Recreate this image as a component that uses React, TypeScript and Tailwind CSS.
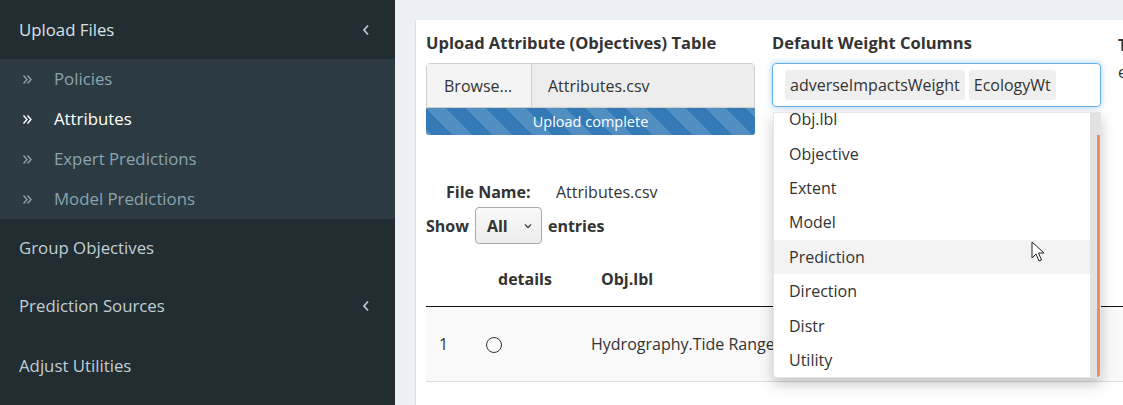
import React from 'react';

const font = { fontFamily: '"Open Sans", Lato, sans-serif' };

function Chevron() {
  return (
    <svg width="8" height="12" viewBox="0 0 8 12" className="text-[#b8c7ce]">
      <path d="M6 1.5 L2 6 L6 10.5" fill="none" stroke="currentColor" strokeWidth="1.8" />
    </svg>
  );
}

function DoubleAngle() {
  return (
    <svg width="11" height="11" viewBox="0 0 11 11" className="mr-[21px]">
      <path d="M1.5 1.5 L5 5.5 L1.5 9.5 M5.5 1.5 L9 5.5 L5.5 9.5" fill="none" stroke="currentColor" strokeWidth="1.4" />
    </svg>
  );
}

function Sidebar() {
  const sub = ['Policies', 'Attributes', 'Expert Predictions', 'Model Predictions'];
  return (
    <aside className="w-[395px] shrink-0 bg-[#222d32] text-[16.8px] text-[#c3ced4]">
      <div className="h-[59px] flex items-center justify-between pl-[19px] pr-[25px] text-[#d9e1e4]">
        <span>Upload Files</span>
        <Chevron />
      </div>
      <ul className="bg-[#2c3b41]">
        {sub.map((s) => (
          <li
            key={s}
            className={
              'h-[40px] flex items-center pl-[22px] ' +
              (s === 'Attributes' ? 'text-white' : 'text-[#8aa4af]')
            }
          >
            <DoubleAngle />
            <span>{s}</span>
          </li>
        ))}
      </ul>
      <div className="h-[57px] flex items-center pl-[19px]">Group Objectives</div>
      <div className="h-[60px] flex items-center justify-between pl-[19px] pr-[25px]">
        <span>Prediction Sources</span>
        <Chevron />
      </div>
      <div className="h-[59px] flex items-center pl-[19px]">Adjust Utilities</div>
    </aside>
  );
}

function Cursor() {
  return (
    <svg width="14" height="22" viewBox="0 0 14 22" className="absolute left-[257px] top-[128px]">
      <path d="M1 1 L1 17 L5 13 L8 20 L10.5 19 L7.5 12 L13 12 Z" fill="white" stroke="#222" strokeWidth="1" strokeLinejoin="round" />
    </svg>
  );
}

function Dropdown() {
  const items = ['Obj.lbl', 'Objective', 'Extent', 'Model', 'Prediction', 'Direction', 'Distr', 'Utility'];
  return (
    <div className="absolute left-[1px] top-[80px] w-[328px] h-[266px] bg-white rounded-b-[4px] shadow-[0_6px_14px_rgba(0,0,0,0.22)] border border-[#e6e6e6] overflow-hidden flex">
      <div className="flex-1 overflow-hidden">
        <div className="-mt-[11px]">
          {items.map((it) => (
            <div
              key={it}
              className={
                'h-[34.4px] flex items-center pl-[15px] text-[16px] text-[#333] ' +
                (it === 'Prediction' ? 'bg-[#f3f3f3]' : '')
              }
            >
              {it}
            </div>
          ))}
        </div>
      </div>
      <div className="w-[10px] bg-[#e2e2e2] flex justify-end">
        <div className="w-[3px] mt-[22px] bg-[#ef8a63]" />
      </div>
      <Cursor />
    </div>
  );
}

export default function App() {
  return (
    <div className="flex w-[1123px] h-[405px] overflow-hidden text-[#333]" style={font}>
      <Sidebar />
      <main className="flex-1 bg-[#ecf0f5] pt-[20px] pl-[20px] overflow-hidden">
        <div className="bg-white h-full border-l border-[#dcdfe4] pl-[10px] pt-[12px] relative">
          <div className="flex gap-[17px]">
            <div className="w-[329px] shrink-0">
              <h3 className="text-[16.5px] font-bold leading-[22px] mb-[9px] whitespace-nowrap">Upload Attribute (Objectives) Table</h3>
              <div className="flex h-[45px] border border-[#cfcfcf] rounded-t-[4px] text-[16px]">
                <div className="w-[105px] bg-[#f4f4f4] border-r border-[#cfcfcf] flex items-center pl-[17px]">Browse...</div>
                <div className="flex-1 bg-[#ededed] flex items-center pl-[16px]">Attributes.csv</div>
              </div>
              <div className="h-[27px] rounded-b-[3px] bg-[#337ab7] bg-[linear-gradient(45deg,rgba(255,255,255,.15)_25%,transparent_25%,transparent_50%,rgba(255,255,255,.15)_50%,rgba(255,255,255,.15)_75%,transparent_75%,transparent)] bg-[length:40px_40px] text-white text-[14.5px] flex items-center justify-center">
                Upload complete
              </div>
            </div>
            <div className="w-[329px] shrink-0 relative z-10">
              <h3 className="text-[16.5px] font-bold leading-[22px] mb-[9px]">Default Weight Columns</h3>
              <div className="h-[44px] border border-[#66afe9] rounded-[4px] shadow-[0_0_6px_rgba(102,175,233,0.6)] flex items-center gap-[4px] pl-[12px] text-[16px] whitespace-nowrap">
                <span className="bg-[#efefef] rounded-[3px] px-[5px] h-[30px] flex items-center">adverseImpactsWeight</span>
                <span className="bg-[#efefef] rounded-[3px] px-[5px] h-[30px] flex items-center">EcologyWt</span>
              </div>
              <Dropdown />
            </div>
            <div className="text-[16px] leading-[27px]">
              <div className="font-bold">T</div>
              <div>e</div>
            </div>
          </div>

          <div className="mt-[45px] flex items-center h-[24px] text-[16px] pl-[20px]">
            <span className="font-bold w-[110px]">File Name:</span>
            <span>Attributes.csv</span>
          </div>
          <div className="flex items-center gap-[6px] text-[16px] font-bold mt-[3px]">
            <span>Show</span>
            <div className="w-[67px] h-[37px] border border-[#aaa] rounded-[4px] bg-[linear-gradient(#fafafa,#ececec)] flex items-center justify-between pl-[11px] pr-[9px]">
              <span>All</span>
              <svg width="8" height="6" viewBox="0 0 8 6"><path d="M1 1.5 L4 4.5 L7 1.5" fill="none" stroke="#444" strokeWidth="1.3" /></svg>
            </div>
            <span>entries</span>
          </div>

          <table className="w-[720px] text-[16px] border-collapse">
            <thead>
              <tr className="h-[62px] border-b border-[#111]">
                <th className="w-[60px]" />
                <th className="w-[104px] text-left font-bold pl-[12px] pt-[8px]">details</th>
                <th className="text-left font-bold pl-[11px] pt-[8px]">Obj.lbl</th>
                <th className="w-[200px]" />
              </tr>
            </thead>
            <tbody>
              <tr className="h-[75px] bg-[#f9f9f9] border-b border-[#dddddd]">
                <td className="pl-[13px]">1</td>
                <td>
                  <span className="inline-block w-[16px] h-[16px] rounded-full border-[1.5px] border-[#333] align-middle" />
                </td>
                <td className="pl-[1px] whitespace-nowrap">Hydrography.Tide Range</td>
                <td className="text-right pr-[2px] leading-[30px]">
                  <div>I</div>
                  <div>w</div>
                </td>
              </tr>
            </tbody>
          </table>
        </div>
      </main>
    </div>
  );
}
